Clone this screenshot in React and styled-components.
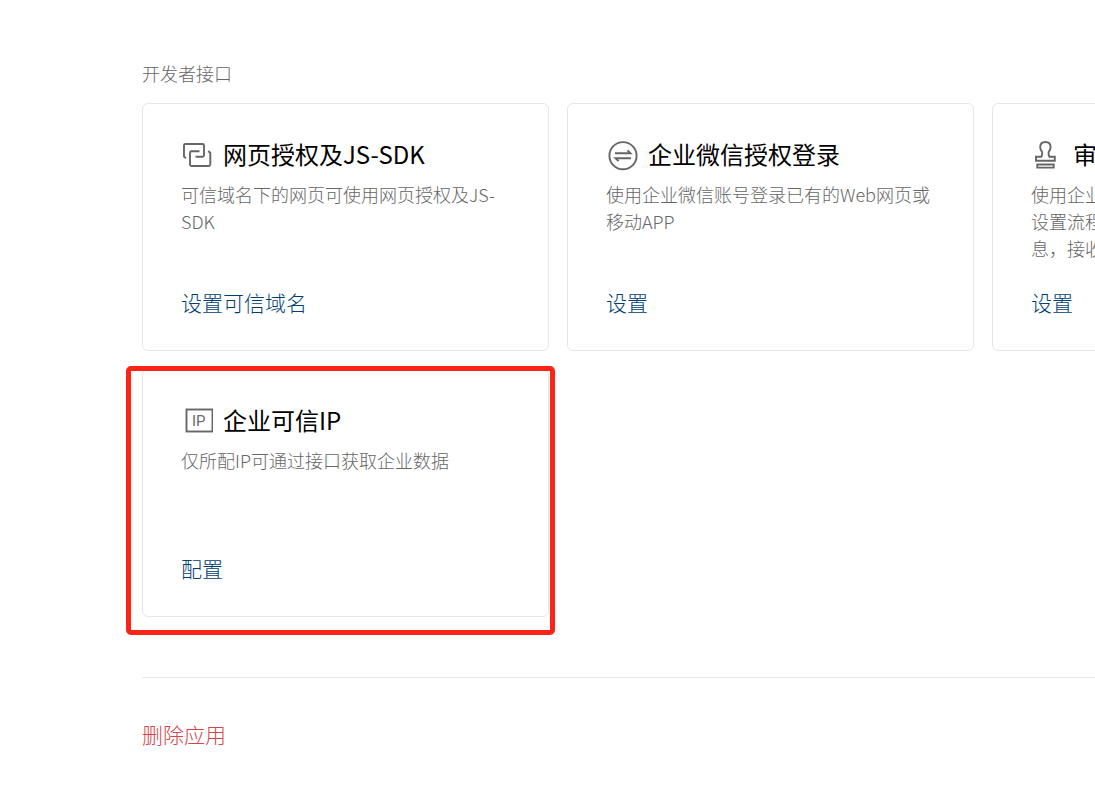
import React from 'react';
import styled, { createGlobalStyle } from 'styled-components';

const GlobalStyle = createGlobalStyle`
  * {
    box-sizing: border-box;
  }

  body {
    margin: 0;
    overflow-x: hidden;
    background-color: #fff;
    color: #000;
    font-family: 'Noto Sans CJK SC', sans-serif;
  }
`;

const Page = styled.main`
  padding: 60px 0 36px 142px;
  overflow-x: hidden;
`;

const SectionTitle = styled.h2`
  margin: 0 0 16px;
  color: #666;
  font-size: 18px;
  font-weight: 300;
  line-height: 27px;
`;

const CardGrid = styled.div`
  display: grid;
  grid-template-columns: repeat(3, 407px);
  grid-auto-rows: minmax(248px, auto);
  gap: 18px;
`;

const Card = styled.article`
  position: relative;
  display: flex;
  flex-direction: column;
  align-items: flex-start;
  padding: 36px 38px 32px;
  border: 1px solid #e4e6e9;
  border-radius: 6px;
`;

const CardHeader = styled.header`
  display: flex;
  align-items: flex-start;
  gap: 10px;
`;

const CardTitle = styled.h3`
  margin: 0;
  font-size: 24px;
  font-weight: 400;
  line-height: 28px;
`;

const Description = styled.p`
  margin: 9px 0 0;
  color: #666;
  font-size: 18px;
  font-weight: 300;
  line-height: 27px;
`;

const ActionLink = styled.a`
  color: ${props => (props.$danger ? '#d44448' : '#003e73')};
  font-size: 21px;
  font-weight: 300;
  line-height: 32px;
  text-decoration: none;
`;

const CardFooter = styled.footer`
  margin-top: auto;
`;

const Highlight = styled.span`
  position: absolute;
  top: -4px;
  right: -7px;
  bottom: -19px;
  left: -17px;
  border: 5px solid #fb2416;
  border-radius: 5px;
  pointer-events: none;
`;

const DangerZone = styled.section`
  margin-top: 60px;
  padding-top: 40px;
  border-top: 1px solid #e4e6e9;
`;

const Icon = styled.svg`
  flex: none;
  width: 32px;
  height: 32px;
  fill: none;
  stroke: #666;
  stroke-width: 1.9;
`;

const IconLabel = styled.text`
  fill: #6b6b6b;
  stroke: none;
  font-family: Roboto, sans-serif;
  font-size: 15px;
`;

const LinkedIcon = () => (
  <Icon viewBox="0 0 32 32" aria-hidden="true">
    <path d="M5 18.3L3 16.6V5.5Q3 4 4.5 4H21.5Q23 4 23 5.5V15.3Q23 16.8 21.5 16.8H14.5" />
    <path d="M18.5 11.3H10.5Q9 11.3 9 12.8V24.5Q9 26 10.500 26H27.800Q29.300 26 29.300 24.500V13L27.300 11" />
  </Icon>
);

const SwitchIcon = () => (
  <Icon viewBox="0 0 32 32" aria-hidden="true">
    <circle cx="17" cy="15.7" r="13.6" />
    <path d="M9 13.3H24.5L21.5 10.3M25 18.2H9.5L12.5 21.2" />
  </Icon>
);

const StampIcon = () => (
  <Icon viewBox="0 0 32 32" aria-hidden="true">
    <path d="M5 20.8V16.8H10.3Q11.6 14.5 11.2 12.2Q9.2 10 9.2 7.3C9.2 4 11.4 2 14.4 2S19.6 4 19.6 7.3Q19.6 10 17.6 12.2Q17.2 14.5 18.5 16.8H23.8V20.8Z" />
    <path d="M6.3 24.5H22.7V27.6H6.3Z" />
  </Icon>
);

const IpIcon = () => (
  <Icon viewBox="0 0 32 32" aria-hidden="true">
    <rect x="5.5" y="3.5" width="26" height="22" />
    <IconLabel x="11" y="20">
      IP
    </IconLabel>
  </Icon>
);

const cards = [
  {
    icon: LinkedIcon,
    title: '网页授权及JS-SDK',
    description: '可信域名下的网页可使用网页授权及JS-SDK',
    action: '设置可信域名',
  },
  {
    icon: SwitchIcon,
    title: '企业微信授权登录',
    description: '使用企业微信账号登录已有的Web网页或移动APP',
    action: '设置',
  },
  {
    icon: StampIcon,
    title: '审批接口',
    description:
      '使用企业微信的审批引擎，在应用内自主设置流程，并且在审批状态变化时获取消息，接收审批结果',
    action: '设置',
  },
  {
    icon: IpIcon,
    title: '企业可信IP',
    description: '仅所配IP可通过接口获取企业数据',
    action: '配置',
    highlighted: true,
  },
];

const InterfaceCard = ({ icon: CardIcon, title, description, action, highlighted }) => (
  <Card>
    <CardHeader>
      <CardIcon />
      <CardTitle>{title}</CardTitle>
    </CardHeader>
    <Description>{description}</Description>
    <CardFooter>
      <ActionLink href="#">{action}</ActionLink>
    </CardFooter>
    {highlighted && <Highlight />}
  </Card>
);

const App = () => (
  <>
    <GlobalStyle />
    <Page lang="zh-CN">
      <SectionTitle>开发者接口</SectionTitle>
      <CardGrid>
        {cards.map(card => (
          <InterfaceCard key={card.title} {...card} />
        ))}
      </CardGrid>
      <DangerZone>
        <ActionLink href="#" $danger>
          删除应用
        </ActionLink>
      </DangerZone>
    </Page>
  </>
);

export default App;
